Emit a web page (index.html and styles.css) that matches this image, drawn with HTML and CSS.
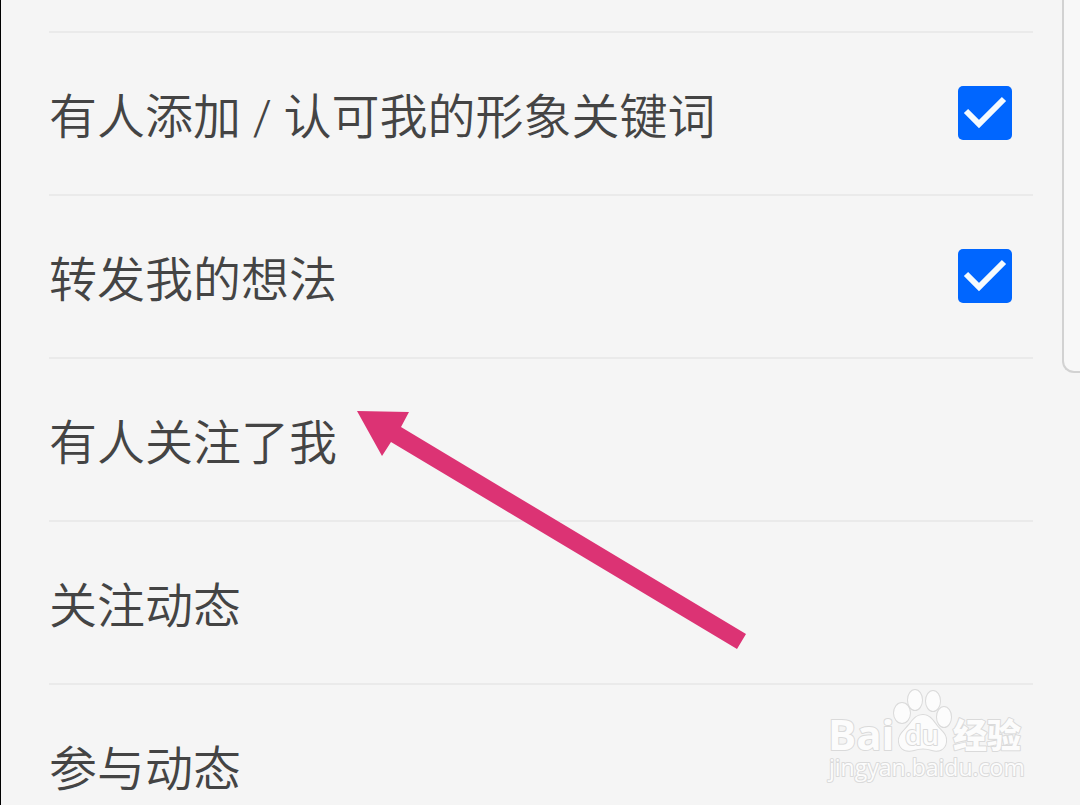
FILE: index.html
```html
<!DOCTYPE html>
<html lang="zh-CN">
<head>
    <meta charset="UTF-8">
    <meta name="viewport" content="width=device-width, initial-scale=1">
    <title>消息通知设置</title>
    <link rel="stylesheet" href="styles.css">
</head>
<body>
    <main class="settings">
        <ul class="list">
            <li class="row">
                <label class="name" for="keyword">有人添加 / 认可我的形象关键词</label>
                <input type="checkbox" id="keyword" class="check" checked>
            </li>
            <li class="row">
                <label class="name" for="repost">转发我的想法</label>
                <input type="checkbox" id="repost" class="check" checked>
            </li>
            <li class="row"><span class="name">有人关注了我</span></li>
            <li class="row"><span class="name">关注动态</span></li>
            <li class="row"><span class="name">参与动态</span></li>
        </ul>
    </main>
    <aside class="panel"></aside>

    <!-- Pointer to the highlighted row -->
    <svg class="arrow" viewBox="0 0 390 240" aria-hidden="true">
        <path d="M1 1 L53 2 L45 17 L390 224 L381 239 L35 32 L26 46 Z"/>
    </svg>

    <!-- Watermark -->
    <svg class="watermark" viewBox="0 0 200 100" role="img" aria-label="Baidu 经验">
        <text class="brand" x="0" y="64">Bai</text>
        <ellipse cx="74" cy="27" rx="8" ry="10"/>
        <ellipse cx="87" cy="14" rx="7" ry="10"/>
        <ellipse cx="105" cy="15" rx="7" ry="10"/>
        <ellipse cx="116" cy="31" rx="7" ry="10"/>
        <path d="M95 29 C102 29 105 35 109 40 C113 45 119 48 118 56 C117 64 110 66 104 64 C98 62 92 62 86 64 C79 66 72 64 71 56 C70 49 76 45 81 39 C85 34 88 29 95 29 Z"/>
        <text class="du" x="77" y="59">du</text>
        <text class="cn" x="125" y="62">经验</text>
        <text class="site" x="1" y="90">jingyan.baidu.com</text>
    </svg>
</body>
</html>
```
FILE: styles.css
```css
* {
    box-sizing: border-box;
}

body {
    display: flex;
    align-items: flex-start;
    position: relative;
    min-height: 100vh;
    margin: 0;
    border-left: 1px solid #000;
    background-color: #f5f5f5;
    color: #444;
    font-family: Roboto, "Noto Sans CJK SC", sans-serif;
    font-size: 48px;
    font-weight: 350;
    line-height: 59px;
    overflow-x: hidden;
}

.settings {
    flex: 1;
    padding: 31px 29px 0 48px;
}

.list {
    margin: 0;
    padding: 0;
    list-style: none;
}

.row {
    display: flex;
    justify-content: space-between;
    align-items: center;
    padding: 45px 21px 47px 0;
    border-top: 2px solid #eaeaea;
}

.row:last-child {
    padding-bottom: 0;
}

.name {
    padding-top: 10px;
}

/* Checkbox */
.check {
    appearance: none;
    width: 54px;
    height: 54px;
    margin: 0;
    border-radius: 5px;
    background-color: #ccc;
}

.check:checked {
    background: #0066ff url("data:image/svg+xml,%3Csvg xmlns='http://www.w3.org/2000/svg' viewBox='0 0 54 54'%3E%3Cpath d='M8 25 L21 38 L46 13' fill='none' stroke='%23f5fbff' stroke-width='6'/%3E%3C/svg%3E") center / 54px no-repeat;
}

/* Side panel running off the right edge */
.panel {
    width: 18px;
    height: 373px;
    border: 2px solid #d2d2d2;
    border-width: 0 0 2px 2px;
    border-bottom-left-radius: 12px;
    background-color: #f8f8f8;
}

.arrow {
    position: absolute;
    top: 410px;
    left: 355px;
    width: 390px;
    height: 240px;
    fill: #dc3374;
    pointer-events: none;
}

.watermark {
    position: absolute;
    right: 52px;
    top: 686px;
    width: 200px;
    height: 100px;
    fill: #fcfcfc;
    stroke: #dadada;
    stroke-width: 2;
    paint-order: stroke;
    overflow: visible;
    pointer-events: none;
}

.watermark text {
    font-family: "Open Sans", "Noto Sans CJK SC", sans-serif;
    stroke-linejoin: round;
}

.watermark .brand {
    font-size: 42px;
    font-weight: 700;
}

.watermark .du {
    font-size: 27px;
    font-weight: 600;
}

.watermark .cn {
    font-size: 34px;
    font-weight: 900;
}

.watermark .site {
    font-size: 23px;
    font-weight: 400;
}
```
